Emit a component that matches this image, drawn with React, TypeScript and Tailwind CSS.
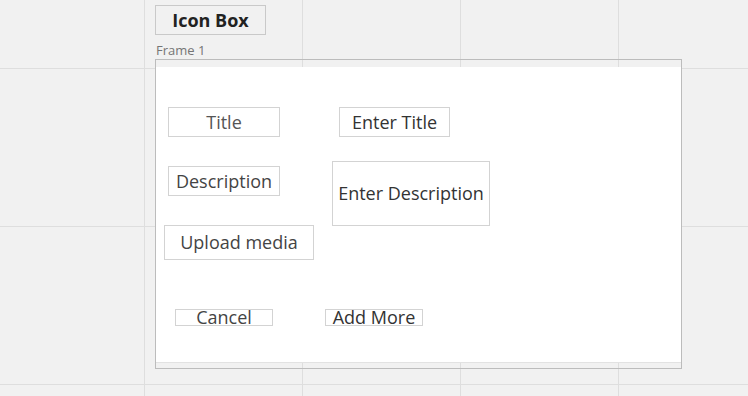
import React from "react";

const box = "flex items-center justify-center border border-[#d3d3d3] bg-white whitespace-nowrap text-[18px]";

export default function App() {
  return (
    <div
      className="relative w-[748px] h-[396px] overflow-hidden bg-[#f1f1f1] bg-[linear-gradient(to_right,#dedede_1px,transparent_1px),linear-gradient(to_bottom,#dedede_1px,transparent_1px)] bg-[size:158px_158px] bg-[position:144px_68px] pl-[155px] pt-[5px]"
      style={{ fontFamily: '"Open Sans", "Noto Sans", sans-serif' }}
    >
      <div className="flex h-[30px] w-[111px] items-center justify-center border border-[#c9c9c9] text-[18px] font-bold text-[#222]">
        Icon Box
      </div>
      <div className="mt-[7px] h-[17px] pl-[1px] text-[13px] leading-[17px] text-[#757575]">
        Frame 1
      </div>
      <div className="flex h-[310px] w-[527px] flex-col border border-[#bcbcbc] pt-[7px] pb-[5px]">
        <div className="flex h-[296px] flex-col border-b border-[#e2e2e2] bg-white pt-[40px]">
          {/* Title row */}
          <div className="flex h-[30px] pl-[12px]">
            <div className={`${box} h-[30px] w-[112px] text-[#555]`}>Title</div>
            <div className={`${box} ml-[59px] h-[30px] w-[111px] text-[#333]`}>Enter Title</div>
          </div>
          {/* Description rows */}
          <div className="mt-[24px] flex">
            <div className="flex w-[176px] flex-col">
              <div className={`${box} ml-[12px] mt-[5px] h-[30px] w-[112px] text-[#444]`}>Description</div>
              <div className={`${box} ml-[8px] mt-[29px] h-[35px] w-[150px] text-[#444]`}>Upload media</div>
            </div>
            <div className={`${box} h-[65px] w-[158px] text-[#333]`}>Enter Description</div>
          </div>
          {/* Buttons */}
          <div className="mt-[49px] flex pl-[19px]">
            <div className={`${box} h-[17px] w-[98px] text-[#444]`}>Cancel</div>
            <div className={`${box} ml-[52px] h-[17px] w-[98px] text-[#333]`}>Add More</div>
          </div>
        </div>
      </div>
    </div>
  );
}
